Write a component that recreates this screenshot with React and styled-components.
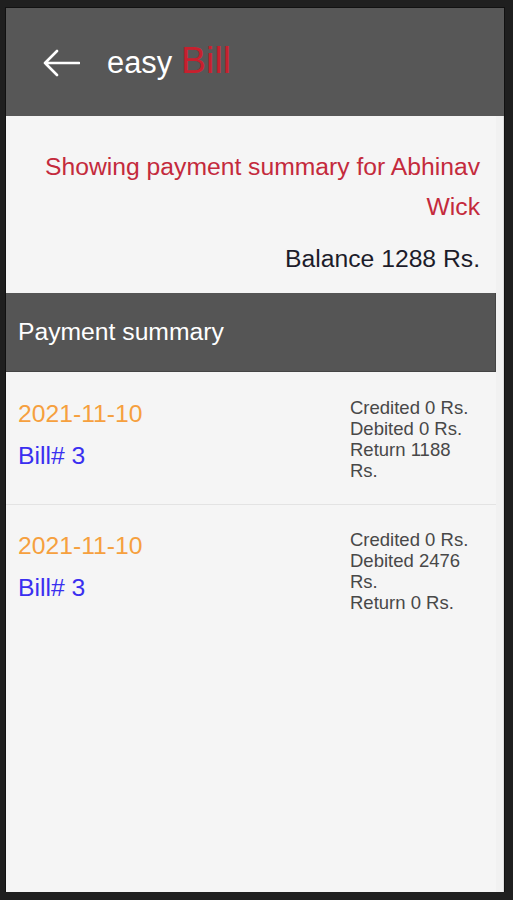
import React from "react";
import styled, { createGlobalStyle } from "styled-components";

const GlobalStyle = createGlobalStyle`
  html, body {
    margin: 0;
    padding: 0;
    background: #1f1f1f;
    font-family: "Liberation Sans", Arial, sans-serif;
  }
`;

const Phone = styled.div`
  width: 498px;
  height: 884px;
  margin: 8px 0 0 6px;
  background: #f5f5f5;
  box-shadow: 0 0 0 1px #111;
  display: flex;
  flex-direction: column;
  overflow: hidden;
`;

const Header = styled.header`
  height: 108px;
  flex-shrink: 0;
  background: #575757;
  display: flex;
  align-items: center;
  padding-left: 36px;
  gap: 27px;
`;

const BackButton = styled.button`
  background: none;
  border: none;
  padding: 0;
  display: flex;
  margin-top: 2px;
`;

const Brand = styled.h1`
  margin: 0;
  font-weight: 400;
  font-size: 30.8px;
  color: #ffffff;
  line-height: 1;
  display: flex;
  align-items: baseline;
  gap: 9px;
  margin-top: -2px;
`;

const BrandAccent = styled.span`
  color: #c8202e;
  font-size: 37.5px;
`;

const Body = styled.div`
  flex: 1;
  display: flex;
`;

const Main = styled.main`
  width: 490px;
  display: flex;
  flex-direction: column;
`;

const Gutter = styled.div`
  flex: 1;
  background: #f1f1f1;
  border-right: 1px solid #dcdcdc;
`;

const Summary = styled.section`
  padding: 31px 16px 14px;
  text-align: right;
  font-size: 24.7px;
  line-height: 40px;
`;

const Intro = styled.p`
  margin: 0;
  color: #c42a3c;
`;

const Balance = styled.p`
  margin: 12px 0 0;
  color: #1c1c2a;
`;

const SectionBar = styled.h2`
  margin: 0;
  height: 79px;
  background: #555555;
  border-right: 1px solid #444;
  border-bottom: 1px solid #444;
  box-sizing: border-box;
  display: flex;
  align-items: center;
  padding-left: 12px;
  color: #ffffff;
  font-size: 24.7px;
  font-weight: 400;
`;

const Row = styled.div`
  height: 132px;
  box-sizing: border-box;
  display: flex;
  align-items: flex-start;
  padding: 24px 22px 0 12px;
  border-bottom: ${(p) => (p.$last ? "none" : "1px solid #e3e3e3")};
  margin-top: ${(p) => (p.$first ? "1px" : "0")};
`;

const Left = styled.div`
  flex: 1;
  display: flex;
  flex-direction: column;
`;

const DateText = styled.div`
  margin-top: 2px;
  font-size: 24.7px;
  line-height: 30px;
  color: #f6a03e;
`;

const BillNo = styled.div`
  margin-top: 12px;
  font-size: 24.7px;
  line-height: 30px;
  color: #3a2ff0;
`;

const Amounts = styled.div`
  width: 124px;
  display: flex;
  flex-direction: column;
`;

const Amount = styled.div`
  font-size: 18.5px;
  line-height: 21px;
  color: #484848;
`;

const ArrowIcon = () => (
  <svg width="38" height="30" viewBox="0 0 38 30" fill="none">
    <path
      d="M37 15H3M15 3L3 15l12 12"
      stroke="#ffffff"
      strokeWidth="2.6"
      strokeLinecap="round"
      strokeLinejoin="round"
    />
  </svg>
);

const entries = [
  { date: "2021-11-10", bill: 3, credited: 0, debited: 0, ret: 1188 },
  { date: "2021-11-10", bill: 3, credited: 0, debited: 2476, ret: 0 },
];

export default function App() {
  return (
    <>
      <GlobalStyle />
      <Phone>
        <Header>
          <BackButton aria-label="Back">
            <ArrowIcon />
          </BackButton>
          <Brand>
            easy <BrandAccent>Bill</BrandAccent>
          </Brand>
        </Header>
        <Body>
          <Main>
            <Summary>
              <Intro>Showing payment summary for Abhinav Wick</Intro>
              <Balance>Balance 1288 Rs.</Balance>
            </Summary>
            <SectionBar>Payment summary</SectionBar>
            {entries.map((e, i) => (
              <Row key={i} $first={i === 0} $last={i === entries.length - 1}>
                <Left>
                  <DateText>{e.date}</DateText>
                  <BillNo>Bill# {e.bill}</BillNo>
                </Left>
                <Amounts>
                  <Amount>Credited {e.credited} Rs.</Amount>
                  <Amount>Debited {e.debited} Rs.</Amount>
                  <Amount>Return {e.ret} Rs.</Amount>
                </Amounts>
              </Row>
            ))}
          </Main>
          <Gutter />
        </Body>
      </Phone>
    </>
  );
}
